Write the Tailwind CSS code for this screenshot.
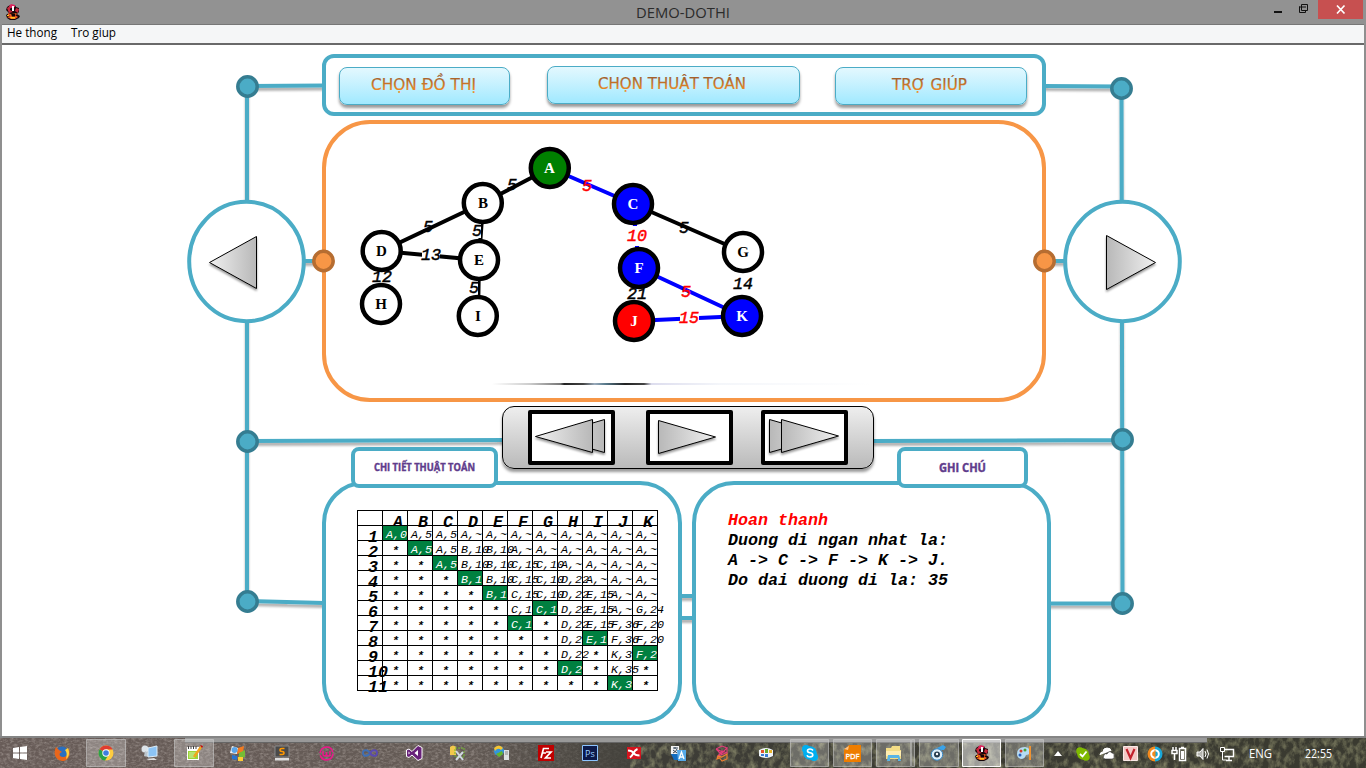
<!DOCTYPE html>
<html lang="vi">
<head>
<meta charset="utf-8">
<title>DEMO-DOTHI</title>
<script src="https://cdn.jsdelivr.net/npm/@tailwindcss/browser@4"></script>
</head>
<body class="w-[1366px] h-[768px] overflow-hidden flex flex-col bg-[#8f8f8f] font-['Open_Sans',sans-serif] text-black">
<svg class="absolute" width="0" height="0">
  <defs>
    <linearGradient id="cap" x1="0" y1="0" x2="0" y2="1"><stop offset=".2" stop-color="#a4602c"/><stop offset=".85" stop-color="#f08a22"/></linearGradient>
    <linearGradient id="triR" x1="0" x2="1"><stop offset="0" stop-color="#b8b8b8"/><stop offset="1" stop-color="#f0f0f0"/></linearGradient>
    <linearGradient id="triL" x1="0" x2="1"><stop offset="0" stop-color="#f0f0f0"/><stop offset="1" stop-color="#b8b8b8"/></linearGradient>
    <filter id="sh" x="-20%" y="-20%" width="140%" height="150%"><feDropShadow dx="0" dy="2" stdDeviation="1.3" flood-color="#000" flood-opacity=".4"/></filter>
    <filter id="lsh" filterUnits="userSpaceOnUse" x="0" y="0" width="1366" height="768"><feDropShadow dx="0" dy="3" stdDeviation="1.2" flood-color="#000" flood-opacity=".3"/></filter>
    <symbol id="imp" viewBox="0 0 16 16">
      <path d="M5 1h5l1 2 3 1v4l-2 2 3 2-1 2-4 2H5l-3-2-1-3 3-2-3-3 1-3z" fill="#16060a"/>
      <path d="M6 0l4 1v2l-4 1-2 1 0-3z" fill="#e0245e"/><path d="M2 4l3-2v4l3 2-4 1zM11 4l3 1-1 4-3-2z" fill="#c8283c"/>
      <path d="M7 2h2v5H7z" fill="#fff"/><path d="M3 9l3 1 4-1 3 1-3 1 3 2-3 2H6l-4-2 3-1-2-1z" fill="#f05a1e"/>
      <path d="M5 13h5v1.500H6zM2 11h2v1H2z" fill="#ffc01e"/><path d="M6 9.500h4v3H7z" fill="#120508"/>
    </symbol>
  </defs>
</svg>

<header class="h-6 shrink-0 flex items-start bg-[#929292] relative">
  <svg class="w-4 h-4 ml-[5px] mt-1"><use href="#imp"/></svg>
  <div class="flex-1 flex justify-center pl-[78px]"><svg width="100" height="24"><text x="3" y="17.500" font-size="14" textLength="94" lengthAdjust="spacingAndGlyphs" fill="#2b2b2b">DEMO-DOTHI</text></svg></div>
  <svg width="100" height="24" fill="none" stroke="#111"><rect x="52" y="0" width="45" height="19" fill="#c75050" stroke="none"/><path d="M8 12h8" stroke-width="2"/><path d="M35.500 4.500h6v6h-6z M33.500 6.500v6h6v-2 M33 7h7" /><path d="M71 5.500l7.500 8m0-8l-7.500 8" stroke="#fff" stroke-width="1.700"/></svg>
</header>
<nav class="h-[19px] shrink-0 mx-[2px] border-t border-[#777] bg-[#f5f6f7] flex">
  <svg width="130" height="18"><g font-size="12" fill="#000"><text x="5" y="12" textLength="50" lengthAdjust="spacingAndGlyphs">He thong</text><text x="69" y="12" textLength="45" lengthAdjust="spacingAndGlyphs">Tro giup</text></g></svg>
</nav>
<main class="relative h-[693px] shrink-0 mx-[2px] border-t-2 border-[#696969] bg-white">
  <!-- connector lines and side arrows around the panels -->
  <svg class="absolute -left-[2px] top-0" width="1366" height="691" viewBox="0 45 1366 691">
    <g stroke="#4bacc6" stroke-width="4" fill="none" filter="url(#lsh)">
      <path d="M247 86L324 85.500M247 86V601M247 441L504 440M247 601L324 603M1044 86L1121 86.500M1121.500 88L1122.500 603M872 441L1122 440M1048 603.500H1122M680 596H694M680 618H694M303 261H322M1046 261H1066"/>
    </g>
    <g fill="#fff" stroke="#4bacc6" stroke-width="4"><ellipse cx="246.500" cy="261.500" rx="57.300" ry="59.700"/><ellipse cx="1122.500" cy="261.500" rx="57.300" ry="59.700"/></g>
    <g fill="#4bacc6" stroke="#357d91" stroke-width="3.500"><circle cx="247.500" cy="86.500" r="9.700"/><circle cx="247.500" cy="441.500" r="9.700"/><circle cx="247.500" cy="601.500" r="9.700"/><circle cx="1121.500" cy="88.500" r="9.700"/><circle cx="1122.500" cy="439.500" r="9.700"/><circle cx="1122.500" cy="603.500" r="9.700"/></g>
    <g stroke="#000" filter="url(#sh)"><path d="M209.500 262.500L256.500 236.500V288.500Z" fill="url(#triL)"/><path d="M1155.500 262.500L1106.500 235.500V289.500Z" fill="url(#triR)"/></g>
  </svg>

  <div class="relative ml-[320px] w-[730px] pt-[9px]">
    <div class="w-[724px] h-[62px] border-4 border-[#4bacc6] rounded-xl bg-white flex items-start pt-[8px] pl-[13px]">
      <div class="w-[171px] h-[38px] mt-px border border-[#4bacc6] rounded-lg bg-linear-to-b from-[#e3f8fe] to-[#a0e9ff] shadow-[0_3px_3px_rgba(0,0,0,.4)]"><svg width="169" height="36"><text x="31" y="22" font-family="DejaVu Sans" font-size="15" textLength="105" lengthAdjust="spacingAndGlyphs" fill="url(#cap)" stroke="url(#cap)" stroke-width=".2">CHỌN ĐỒ THỊ</text></svg></div>
      <div class="w-[253px] h-[38px] ml-[37px] border border-[#4bacc6] rounded-lg bg-linear-to-b from-[#e3f8fe] to-[#a0e9ff] shadow-[0_3px_3px_rgba(0,0,0,.4)]"><svg width="251" height="36"><text x="50" y="22" font-family="DejaVu Sans" font-size="15" textLength="148" lengthAdjust="spacingAndGlyphs" fill="url(#cap)" stroke="url(#cap)" stroke-width=".2">CHỌN THUẬT TOÁN</text></svg></div>
      <div class="w-[192px] h-[38px] mt-px ml-[35px] border border-[#4bacc6] rounded-lg bg-linear-to-b from-[#e3f8fe] to-[#a0e9ff] shadow-[0_3px_3px_rgba(0,0,0,.4)]"><svg width="190" height="36"><text x="56" y="22" font-family="DejaVu Sans" font-size="15" textLength="75" lengthAdjust="spacingAndGlyphs" fill="url(#cap)" stroke="url(#cap)" stroke-width=".2">TRỢ GIÚP</text></svg></div>
    </div>

    <section class="mt-1 w-[724px] h-[282px] border-4 border-[#f79646] rounded-[48px] bg-white">
      <svg width="716" height="274" viewBox="326 124 716 274" class="overflow-visible">
        <defs><linearGradient id="strip"><stop offset="0" stop-color="#fff"/><stop offset=".1" stop-color="#ccc"/><stop offset=".18" stop-color="#777"/><stop offset=".19" stop-color="#222"/><stop offset=".24" stop-color="#444"/><stop offset=".27" stop-color="#9ab"/><stop offset=".3" stop-color="#578"/><stop offset=".35" stop-color="#222"/><stop offset=".4" stop-color="#444"/><stop offset=".42" stop-color="#dde"/><stop offset=".6" stop-color="#f4f6fa"/><stop offset="1" stop-color="#fff"/></linearGradient></defs>
        <rect x="492" y="383" width="380" height="2" fill="url(#strip)"/>
        <path d="M550 168L483 203L382 251L479 260L483 203M479 260L478 316M633 204L743 252" stroke="#000" stroke-width="4" fill="none"/>
        <path d="M550 168L633 204M639 268L742 316L634 321M633 204L639 268" stroke="#00f" stroke-width="4" fill="none"/>
        <g fill="#fff"><rect x="626" y="226" width="22" height="20"/><rect x="422" y="247" width="18" height="15"/><rect x="680" y="311" width="19" height="15"/><rect x="472" y="224" width="9" height="14"/><rect x="469" y="281" width="9" height="14"/></g>
        <g stroke="#000" stroke-width="4.500" fill="#fff">
          <circle cx="549.800" cy="168" r="19" fill="#008000"/><circle cx="482.800" cy="203" r="19"/><circle cx="633" cy="204" r="19" fill="#00f"/><circle cx="381.700" cy="251" r="19"/><circle cx="479" cy="260" r="19"/><circle cx="639" cy="268" r="19" fill="#00f"/><circle cx="743" cy="252" r="19"/><circle cx="381" cy="304" r="19"/><circle cx="477.800" cy="316" r="19"/><circle cx="634" cy="321" r="19" fill="#f00"/><circle cx="742" cy="316" r="19" fill="#00f"/>
        </g>
        <g font-family="Liberation Serif" font-weight="bold" font-size="15" text-anchor="middle" fill="#000">
          <text x="549.500" y="173" fill="#fff">A</text><text x="483" y="208">B</text><text x="633" y="209" fill="#fff">C</text><text x="381.500" y="256">D</text><text x="479" y="265">E</text><text x="639" y="273" fill="#fff">F</text><text x="743" y="257">G</text><text x="381" y="309">H</text><text x="478" y="321">I</text><text x="634" y="326" fill="#fff">J</text><text x="742" y="321" fill="#fff">K</text>
        </g>
        <g font-family="Liberation Mono" font-style="italic" font-size="16.670" text-anchor="middle" fill="#000" stroke="#000" stroke-width=".45">
          <text x="512" y="190">5</text><text x="428" y="232">5</text><text x="477" y="236">5</text><text x="431" y="260">13</text><text x="382" y="282">12</text><text x="474" y="293">5</text><text x="684" y="233">5</text><text x="637" y="299">21</text><text x="743" y="289">14</text>
          <g fill="#f00" stroke="#f00"><text x="587" y="191">5</text><text x="637" y="241">10</text><text x="686" y="297">5</text><text x="689" y="323">15</text></g>
        </g>
      </svg>
    </section>

    <div class="ml-[180px] mt-1 w-[372px] h-[63px] border border-black rounded-[12px] bg-linear-to-b from-[#eeeeee] to-[#bababa] shadow-[0_3px_3px_rgba(0,0,0,.4)] flex pt-[3px] pl-[25px] gap-[31px]">
      <div class="w-[87px] h-[55px] border-4 border-black rounded-[2px] bg-white"><svg width="79" height="47" viewBox="532 414 79 47"><g stroke="#000" filter="url(#sh)" fill="url(#triL)"><path d="M547 436.500L604.500 419.500V452.500Z"/><path d="M535.500 436.500L592.500 419.500V452.500Z"/></g></svg></div>
      <div class="w-[87px] h-[55px] border-4 border-black rounded-[2px] bg-white"><svg width="79" height="47" viewBox="650 414 79 47"><path d="M715.500 437L658.500 420.500V453.500Z" stroke="#000" filter="url(#sh)" fill="url(#triR)"/></svg></div>
      <div class="-ml-[3px] w-[87px] h-[55px] border-4 border-black rounded-[2px] bg-white"><svg width="79" height="47" viewBox="765 414 79 47"><g stroke="#000" filter="url(#sh)" fill="url(#triR)"><path d="M827 436L769.500 419.500V452.500Z"/><path d="M838.500 436L781.500 419.500V452.500Z"/></g></svg></div>
    </div>

    <div class="flex gap-[10px] mt-3">
      <section class="relative w-[360px] h-[244px] border-4 border-[#4bacc6] rounded-[42px] bg-white pl-[31px] pt-[25px]">
        <div class="absolute left-[25px] -top-[38px] w-[147px] h-[41px] border-4 border-[#4bacc6] rounded-lg bg-white"><svg width="139" height="33"><text x="19" y="20" font-size="10.500" font-weight="bold" textLength="101" lengthAdjust="spacingAndGlyphs" fill="#5f3c8c" stroke="#5f3c8c" stroke-width=".4">CHI TIẾT THUẬT TOÁN</text></svg></div>
        <div id="grid" class="grid grid-cols-[repeat(12,25px)] auto-rows-[15px] w-[301px] border-t border-l border-black font-['Liberation_Mono',monospace] italic font-bold whitespace-pre"></div>
      </section>
      <section class="relative w-[359px] h-[244px] border-4 border-[#4bacc6] rounded-[42px] bg-white pl-[32px] pt-[26px]">
        <div class="absolute left-[201px] -top-[38px] w-[131px] h-[41px] border-4 border-[#4bacc6] rounded-lg bg-white"><svg width="123" height="33"><text x="38" y="21" font-size="12" font-weight="bold" textLength="47" lengthAdjust="spacingAndGlyphs" fill="#5f3c8c" stroke="#5f3c8c" stroke-width=".4">GHI CHÚ</text></svg></div>
        <div class="font-['Liberation_Mono',monospace] italic font-bold text-[16.67px] leading-5 whitespace-pre"><p class="text-[#ff0000]">Hoan thanh</p><p>Duong di ngan nhat la:</p><p>A -&gt; C -&gt; F -&gt; K -&gt; J.</p><p>Do dai duong di la: 35</p></div>
      </section>
    </div>
  </div>
  <svg class="absolute -left-[2px] top-0 pointer-events-none" width="1366" height="691" viewBox="0 45 1366 691"><g fill="#f79646" stroke="#b66d31" stroke-width="3.500"><circle cx="323.500" cy="261" r="9.700"/><circle cx="1044.500" cy="261" r="9.700"/></g></svg>
</main>
<div class="h-[2px] shrink-0 bg-[#858585]"></div>
<footer class="relative h-[30px] shrink-0 bg-linear-to-r from-[#685c58] via-[#625a54] via-48% to-[#34351f]">
  <svg class="absolute inset-0" width="1366" height="30">
    <defs>
      <filter id="grain" x="0" y="0" width="100%" height="100%"><feTurbulence type="fractalNoise" baseFrequency=".28 .45" numOctaves="3" seed="4"/><feColorMatrix values="0 0 0 0 .72  0 0 0 0 .66  0 0 0 0 .62  1.800 0 0 0 -.7"/></filter>
      <filter id="grass" x="0" y="0" width="100%" height="100%"><feTurbulence type="fractalNoise" baseFrequency=".16 .12" numOctaves="4" seed="9"/><feColorMatrix values="0 0 0 0 .52  0 0 0 0 .52  0 0 0 0 .28  2.200 0 0 0 -.85"/></filter>
      <linearGradient id="dk"><stop offset="0" stop-color="#3a3a34" stop-opacity="0"/><stop offset=".2" stop-color="#3a3a34" stop-opacity=".9"/><stop offset="1" stop-color="#3a3a30"/></linearGradient>
    </defs>
    <rect width="640" height="30" filter="url(#grain)" opacity=".4"/>
    <rect x="470" width="896" height="30" fill="url(#dk)"/>
    <rect x="630" width="736" height="30" filter="url(#grass)" opacity=".5"/>
    <rect x="185" width="1022" height="4" fill="#999"/>
    <rect x="185" y="4" width="1022" height="1" fill="#666"/>
    <g fill="#fff" fill-opacity=".25" stroke="#ccc" stroke-opacity=".6"><path d="M86.500 1.500h39v27h-39zM174.500 1.500h39v27h-39zM790.500 1.500h38v27h-38zM833.500 1.500h38v27h-38zM876.500 1.500h34v27h-34zM911.500 1.500h3v27h-3zM919.500 1.500h39v27h-39zM1005.500 1.500h38v27h-38z"/><path d="M962.500 1.500h38v27h-38z" fill-opacity=".5" stroke="#fff" stroke-opacity=".95"/></g>
  </svg>
  <div class="relative h-full flex items-center">
    <div class="w-10 flex justify-center"><svg width="14" height="14" fill="#fff"><path d="M0 2l6-1v5.500H0zM7 1l7-1v6.500H7zM0 7.500h6V13l-6-1zM7 7.500h7V14l-7-1z"/></svg></div>
    <div class="w-11 flex justify-center"><svg width="16" height="16"><circle cx="8" cy="8" r="6.500" fill="#2a6fc0"/><path d="M2 2C-1 8 1 15 8 16c6 0 9-6 7-11l-1-2c1 5-1 9-5 9-3 0-4-2-3-4l2-1-3-2z" fill="#e8661b"/><path d="M14 3c2 5 1 9-2 11 1-4 1-7-1-9z" fill="#ffd23c"/></svg></div>
    <div class="w-11 flex justify-center"><svg width="16" height="16"><circle cx="8" cy="8" r="7.500" fill="#ffcd40"/><path d="M8 8L1.500 4.300A7.500 7.500 0 0 1 14.700 4.500H8z" fill="#e03c31"/><path d="M8 8L1.500 4.300A7.500 7.500 0 0 0 7 15.500L10.500 10z" fill="#2ba14b"/><circle cx="8" cy="8" r="3.700" fill="#fff"/><circle cx="8" cy="8" r="2.800" fill="#3f7de0"/></svg></div>
    <div class="w-11 flex justify-center"><svg width="18" height="16"><circle cx="4" cy="4" r="3.500" fill="#dde3e8"/><path d="M4 6l4 2v4l-5-1z" fill="#bcc5cc"/><path d="M7 3l9-2v10l-9 1z" fill="#8cc4f5" stroke="#dcecf8"/><path d="M5 14l8-1 3 2H8z" fill="#ddd"/></svg></div>
    <div class="w-11 flex justify-center"><svg width="18" height="16"><path d="M2 2h12v13H2z" fill="#fff"/><path d="M3 6h10v8H3z" fill="#9bd53a"/><path d="M3.500 1v3M6 1v3M8.500 1v3M11 1v3" stroke="#444"/><path d="M4 8h7M4 10h5M4 12h6" stroke="#d6f0a8"/><path d="M16 2L9 12" stroke="#f2a51e" stroke-width="2.500"/><path d="M15 0l3 1-1 2z" fill="#c00"/></svg></div>
    <div class="w-11 flex justify-center"><svg width="16" height="16"><path d="M2 1l6 2-1 6-7-1z" fill="#f4f4f4"/><path d="M8 3l6-2-1 6-6 2z" fill="#f37b20"/><path d="M9 8l6-3v7l-6 2z" fill="#75bd35"/><circle cx="4.500" cy="5" r="3" fill="#5ba5e8"/><path d="M2 10l5 1v4l-5-1z" fill="#2773cf"/><path d="M8 12h5v4H8z" fill="#fc3"/></svg></div>
    <div class="w-11 flex justify-center"><svg width="16" height="16"><path d="M1 1h14v11H1z" fill="#4a4a4a" stroke="#888"/><path d="M1 13h14v2.500H1z" fill="#ddd"/><path d="M10.500 3.500H8q-2 0-2 1.500t2 1.500 2 1.500-2 1.500H5.500" fill="none" stroke="#ff9800" stroke-width="1.500"/></svg></div>
    <div class="w-11 flex justify-center"><svg width="15" height="15" fill="none" stroke="#f0148c" stroke-width="1.500"><circle cx="7.500" cy="7.500" r="6.500" stroke-dasharray="18 2.400"/><path d="M4 5v3q0 2 1.700 2T7.500 8V6v2q0 2 1.800 2T11 8V5"/></svg></div>
    <div class="w-11 flex justify-center"><svg width="18" height="12" fill="none" stroke-width="2"><path d="M9 6C7 2.500 2 2 2 6s5 3.500 7 0" stroke="#3f6fb4"/><path d="M9 6c2-3.500 7-4 7 0s-5 3.500-7 0" stroke="#5a4ab0"/></svg></div>
    <div class="w-11 flex justify-center"><svg width="17" height="16"><path d="M12 .5l4 2v11l-4 2-6-5.500-3 2.500-2.500-1V5l2.500-1 3 2.500z" fill="#68217a" stroke="#fff"/><path d="M12 5v6L8.500 8zM2.500 6.500v3L4 8z" fill="#fff"/></svg></div>
    <div class="w-11 flex justify-center"><svg width="18" height="16"><path d="M1 2q3-3 6 0v8H1z" fill="#f2c84b"/><path d="M6 3h9v9H6z" fill="none" stroke="#71b82f" stroke-dasharray="2 1"/><path d="M7 6l7 9M14 7l-7 8" stroke="#cfd8e0" stroke-width="2"/></svg></div>
    <div class="w-11 flex justify-center"><svg width="18" height="16"><circle cx="6" cy="6" r="5" fill="#3295de"/><path d="M1 3q5-5 9 0L8 5Q5 2 2 6z" fill="#f6c531"/><path d="M3 9l6-3 1 3-4 3z" fill="#65b52b"/><path d="M11 5h5v10h-5z" fill="#dde1e4"/><path d="M12 7h3M12 9h3" stroke="#888"/></svg></div>
    <div class="w-11 flex justify-center"><svg width="16" height="16"><path d="M0 0h16v16H0z" fill="#bf0000"/><path d="M3 13L5.500 3.500H11M4.500 8H8M8 7h5l-5.500 6H13" fill="none" stroke="#fff" stroke-width="1.700"/></svg></div>
    <div class="w-11 flex justify-center"><svg width="16" height="16"><path d="M.5.500h15v15H.5z" fill="#0c1a4a" stroke="#8cc4ff"/><text x="3" y="11.500" font-size="9" fill="#9cd0ff">Ps</text></svg></div>
    <div class="w-11 flex justify-center"><svg width="14" height="14"><path d="M0 1h14v12H0z" fill="#d4141e"/><path d="M1 4.500q4 0 5.500 2.500T12.500 9.500M10.500 3Q8 4 6.500 7T3 11.500" stroke="#fff" stroke-width="2" fill="none"/></svg></div>
    <div class="w-11 flex justify-center"><svg width="17" height="17"><path d="M1 1h8v8H1z" fill="#f4f4f4"/><path d="M3 3h5M5 2v2M7 4q-1 3-4 4M3 5l4 3" stroke="#345" fill="none"/><path d="M1 9h7v6H4z" fill="#126dc0"/><path d="M7 5h9v11H8z" fill="#55a9e8"/><path d="M9 14l2.500-7L14 14M10 12h3.500" stroke="#fff" fill="none" stroke-width="1.300"/></svg></div>
    <div class="w-11 flex justify-center"><svg width="16" height="17" fill="none" stroke-width="1.100"><path d="M2 4l6-3 5 2-4 4-7-3 5 5 6-6v5L8 6 4 11l8-3" stroke="#e33c7a"/><path d="M4 11l4 5 5-2V9l-5 3-5 2 1-3 4 1" stroke="#f08030"/></svg></div>
    <div class="w-11 flex justify-center"><svg width="16" height="12"><path d="M1 3q7-4 14 0v6q-7 4-14 0z" fill="#f0f4f8"/><path d="M3 3h3v3H3z" fill="#e5542c"/><path d="M7 2h3v4H7z" fill="#67aa32"/><path d="M11 3h3v3h-3z" fill="#eab428"/><path d="M3 7h3v2H3zM7 7h3v3H7z" fill="#3b7ed4"/></svg></div>
    <div class="w-[43px] flex justify-center"><svg width="16" height="16"><circle cx="8" cy="8" r="6.800" fill="#00aff0"/><circle cx="4" cy="4" r="4" fill="#00aff0"/><circle cx="12" cy="12" r="4" fill="#00aff0"/><path d="M11 5.500Q10 4 8 4q-2.500 0-2.500 1.800T8 7.800t2.800 2T8 12q-2.500 0-3-1.800" fill="none" stroke="#fff" stroke-width="1.600"/></svg></div>
    <div class="w-[43px] flex justify-center"><svg width="17" height="17"><path d="M5 0h12v17H0V5z" fill="#ee7d00"/><path d="M0 4l4 1 1-4z" fill="#ffc382"/><text x="1.500" y="14" font-size="8" fill="#fff" stroke="#fff" stroke-width=".3" textLength="14" lengthAdjust="spacingAndGlyphs">PDF</text></svg></div>
    <div class="w-[43px] flex justify-center pr-[5px]"><svg width="17" height="15"><path d="M1 2h5l1-2h8v4h1v9H1z" fill="#f4dd86"/><path d="M1 5h15v5H1z" fill="#ffedb0"/><path d="M3 9h11l2 6h-3v-3H5v3H2z" fill="#5ab4e5"/></svg></div>
    <div class="w-[43px] flex justify-center"><svg width="17" height="16"><path d="M13 0l3 2-2 3Q9 5 7 3z" fill="#3aa2e8"/><circle cx="7" cy="9.500" r="5.700" fill="#dceefa" stroke="#3789c8"/><circle cx="7" cy="9.500" r="3" fill="#263c50"/><circle cx="7" cy="9" r="1.200" fill="#fff"/></svg></div>
    <div class="w-[43px] flex justify-center"><svg width="16" height="16"><use href="#imp"/></svg></div>
    <div class="w-[43px] flex justify-center"><svg width="17" height="16"><path d="M1 9q0-7 8-7 6 1 5 6-1 2-4 2-1 4-5 4-4-1-4-5z" fill="#b5dcf5"/><circle cx="5" cy="6" r="1.500" fill="#d43c2d"/><circle cx="9" cy="5" r="1.500" fill="#4da336"/><circle cx="4" cy="10" r="1.500" fill="#2b60bd"/><path d="M14 1v14" stroke="#ef9230" stroke-width="2"/></svg></div>
    <svg width="320" height="30" class="shrink-0" viewBox="1046 738 320 30" fill="none" stroke="#fff">
      <path d="M1054 756l4-5 4 5z" fill="#fff" stroke="none"/>
      <circle cx="1083" cy="754" r="5.800" fill="#7fba00" stroke="none"/><circle cx="1080" cy="751" r="3.800" fill="#7fba00" stroke="none"/><circle cx="1086" cy="757" r="3.800" fill="#7fba00" stroke="none"/><path d="M1080 754l2.500 2.500 4-5" stroke-width="1.800"/>
      <path d="M1100 755q0-3 3-3 0-4 4-4 4 0 4 3" fill="#fff" stroke-width="1"/><path d="M1105 759q-3-1-1-4 1-2 3-1 2-4 5-1 3 0 2 3 1 3-2 3z" fill="#fff" stroke="#333" stroke-width=".6"/>
      <path d="M1123.500 746.500h14v14h-14z" fill="#f3c9c6" stroke="#faeae8"/><path d="M1126.500 749l4 9 4-9" stroke="#c2202c" stroke-width="2.200"/>
      <path d="M1155 746.500a7.500 7.500 0 0 0 0 15z" fill="#f48a1d" stroke="none"/><path d="M1155 746.500a7.500 7.500 0 0 1 0 15z" fill="#19a8d8" stroke="none"/><circle cx="1155" cy="754" r="3.800" stroke-width="2"/><path d="M1155 750v8" stroke="#ee8a1c"/>
      <path d="M1179.500 748.500h6v12h-6zM1181 747.500h3" stroke-width="1.500"/><path d="M1181 751h3v8h-3z" fill="#fff" stroke="none"/><path d="M1173 747v3m3-3v3m-4 .5h5v3h-5zM1174.500 753v7" stroke-width="1.500"/>
      <path d="M1197 752h3l3-3.500v11l-3-3.500h-3z" fill="#fff" fill-opacity=".6"/><path d="M1205 751q2 3 0 6M1207 749.500q3 4.500 0 9"/>
      <path d="M1224.500 749.500h9v7h-9M1229 757v3M1226 760.500h6" stroke-width="1.400"/><path d="M1220.500 747.500h4v4h-4zM1222.500 752v8h4"/>
      <g fill="#fff" stroke="none" font-size="13"><text x="1249" y="758" textLength="23" lengthAdjust="spacingAndGlyphs">ENG</text><text x="1305" y="758" textLength="27" lengthAdjust="spacingAndGlyphs">22:55</text></g>
    </svg>
  </div>
</footer>
<script>
// One line per step of the algorithm; a trailing "g" marks the vertex picked in that step.
const steps = [
  "A,0g A,5 A,5 A,~ A,~ A,~ A,~ A,~ A,~ A,~ A,~",
  "* A,5g A,5 B,10 B,10 A,~ A,~ A,~ A,~ A,~ A,~",
  "* * A,5g B,10 B,10 C,15 C,10 A,~ A,~ A,~ A,~",
  "* * * B,10g B,10 C,15 C,10 D,22 A,~ A,~ A,~",
  "* * * * B,10g C,15 C,10 D,22 E,15 A,~ A,~",
  "* * * * * C,15 C,10g D,22 E,15 A,~ G,24",
  "* * * * * C,15g * D,22 E,15 F,36 F,20",
  "* * * * * * * D,22 E,15g F,36 F,20",
  "* * * * * * * D,22 * K,35 F,20g",
  "* * * * * * * D,22g * K,35 *",
  "* * * * * * * * * K,35g *"];
const line = "border-r border-b border-black ";
const big = line + "pl-[10px] text-[16.67px] leading-[23px] h-[15px]";
const cell = line + "pl-[3px] text-[11.7px] leading-[18px] h-[15px] font-normal";
const star = line + "pl-[9px] text-[11.7px] leading-[20px] h-[15px]";
const pick = line + "pl-[3px] text-[11.7px] leading-[18px] h-[15px] font-normal text-white bg-[#008040] relative z-10 overflow-hidden";
let html = `<div class="${line}"></div>`;
for (const c of "ABCDEFGHIJK") html += `<div class="${big}">${c}</div>`;
steps.forEach((row, i) => {
  html += `<div class="${big}">${i + 1}</div>`;
  for (const t of row.split(" ")) {
    const g = t.endsWith("g");
    html += `<div class="${g ? pick : t === "*" ? star : cell}">${g ? t.slice(0, -1) : t}</div>`;
  }
});
document.getElementById("grid").innerHTML = html;
</script>
</body>
</html>
